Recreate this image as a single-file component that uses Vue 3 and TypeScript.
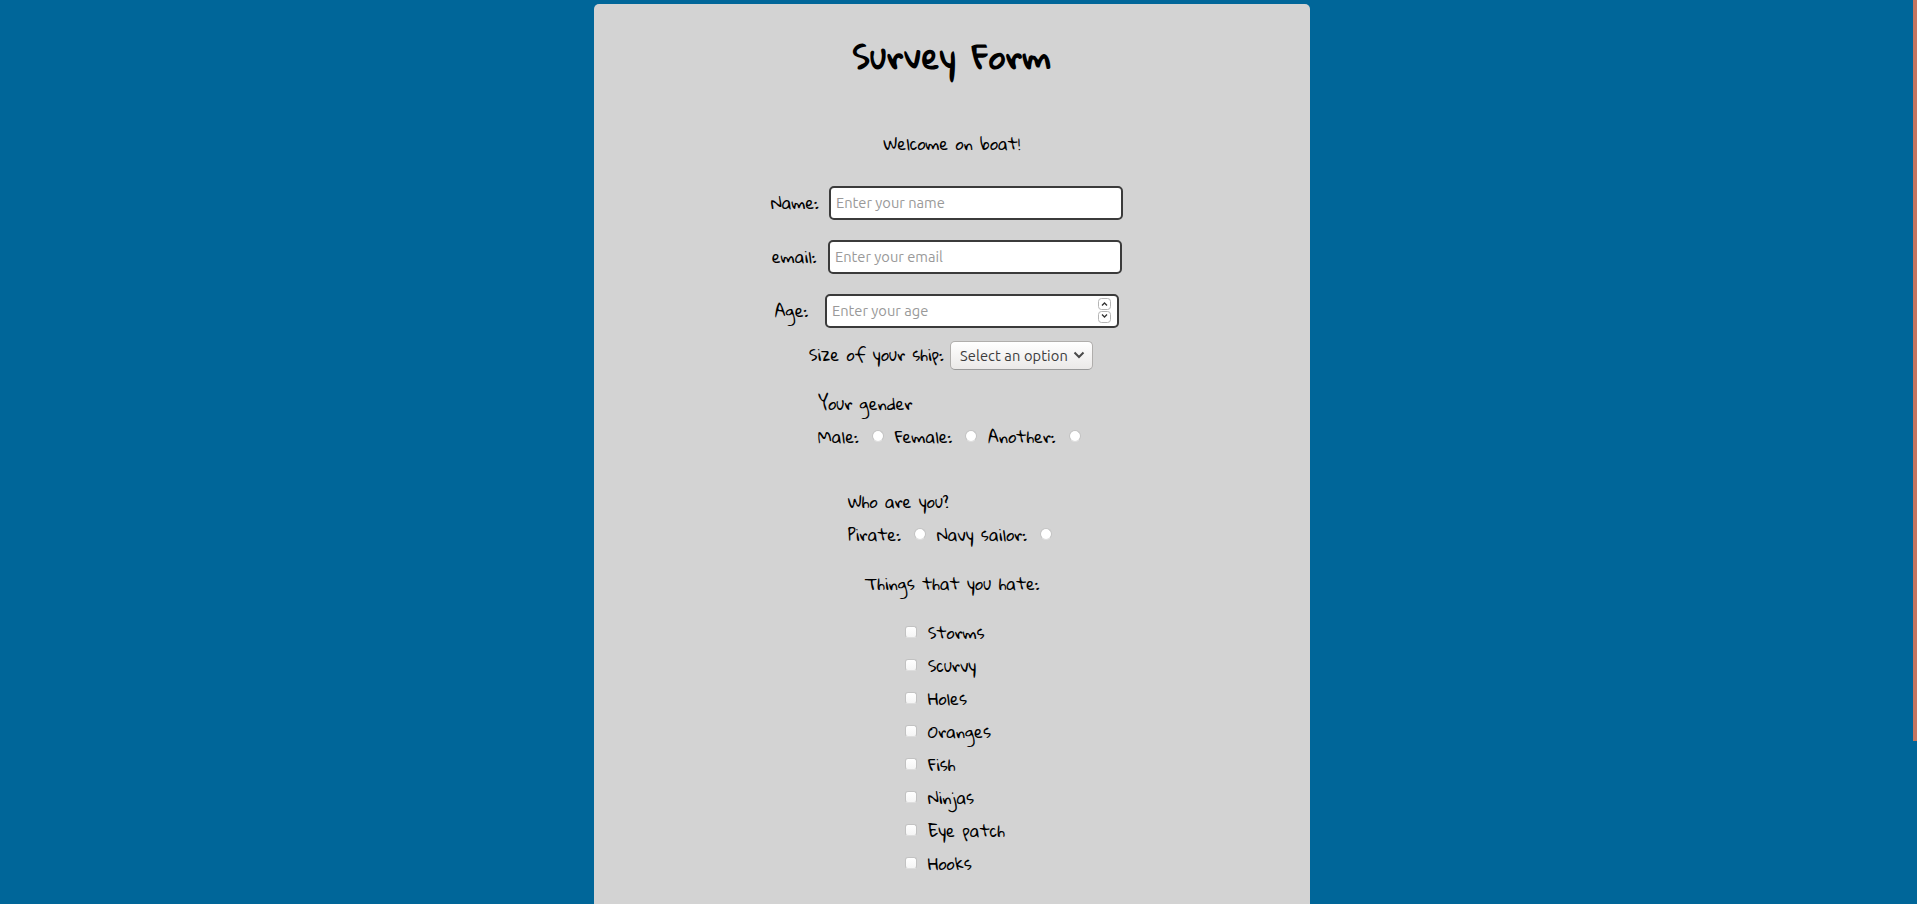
<script setup lang="ts">
interface TextField {
  id: string
  label: string
  placeholder: string
}

const fields: TextField[] = [
  { id: 'name', label: 'Name:', placeholder: 'Enter your name' },
  { id: 'email', label: 'email:', placeholder: 'Enter your email' },
  { id: 'age', label: 'Age:', placeholder: 'Enter your age' },
]
const genders: string[] = ['Male:', 'Female:', 'Another:']
const roles: string[] = ['Pirate:', 'Navy sailor:']
const hates: string[] = ['Storms', 'Scurvy', 'Holes', 'Oranges', 'Fish', 'Ninjas', 'Eye patch', 'Hooks']
</script>

<template>
  <main class="page">
    <form class="card" @submit.prevent>
      <h1 class="title">Survey Form</h1>
      <p class="welcome">Welcome on boat!</p>

      <div v-for="f in fields" :key="f.id" class="field" :class="f.id">
        <label :for="f.id">{{ f.label }}</label>
        <div class="box">
          <input :id="f.id" type="text" :placeholder="f.placeholder" />
          <div v-if="f.id === 'age'" class="spinner">
            <svg viewBox="0 0 13 12"><rect x=".5" y=".5" width="12" height="11" rx="3" /><path d="M4 7.5 6.5 5 9 7.5" /></svg>
            <svg viewBox="0 0 13 12"><rect x=".5" y=".5" width="12" height="11" rx="3" /><path d="M4 3.5 6.5 6 9 3.5" /></svg>
          </div>
        </div>
      </div>

      <div class="ship">
        <label>Size of your ship:</label>
        <button type="button" class="select">
          <span>Select an option</span>
          <svg viewBox="0 0 12 8"><path d="M1.5 1.5 6 6l4.500-4.500" /></svg>
        </button>
      </div>

      <section class="gender">
        <p>Your gender</p>
        <div class="radios">
          <label v-for="g in genders" :key="g">
            <span>{{ g }}</span>
            <input type="radio" name="gender" />
          </label>
        </div>
      </section>

      <section class="role">
        <p>Who are you?</p>
        <div class="radios">
          <label v-for="r in roles" :key="r">
            <span>{{ r }}</span>
            <input type="radio" name="role" />
          </label>
        </div>
      </section>

      <p class="hate-title">Things that you hate:</p>
      <div class="hates">
        <label v-for="h in hates" :key="h">
          <input type="checkbox" />
          <span>{{ h }}</span>
        </label>
      </div>
    </form>
    <div class="scrollbar"></div>
  </main>
</template>

<style>
body {
  margin: 0;
  overflow: hidden;
  background: #069;
}
</style>

<style scoped>
.page {
  box-sizing: border-box;
  height: 100vh;
  padding-top: 4px;
  overflow: hidden;
  background: #069;
  color: #000;
  font: 16px/24px "Gloria Hallelujah", Lato, sans-serif;
  letter-spacing: 0.1px;
}
.card {
  box-sizing: border-box;
  width: 716px;
  height: 1100px;
  margin-left: 594px;
  padding-top: 30px;
  border-radius: 5px;
  background: #d3d3d3;
}
.card label,
.card span {
  white-space: nowrap;
}
h1,
p {
  margin: 0;
}
.title {
  text-align: center;
  font-size: 32px;
  line-height: 44px;
  font-weight: 700;
  letter-spacing: 0.95px;
}
.welcome {
  margin: 54px 0 30px;
  text-align: center;
}
.field {
  display: flex;
  align-items: flex-start;
  height: 34px;
  margin-bottom: 20px;
}
.field label {
  box-sizing: border-box;
  padding-top: 5px;
}
.name label {
  width: 58px;
}
.email label {
  width: 56px;
}
.age label {
  width: 50px;
}
.name {
  margin-left: 177px;
}
.email {
  margin-left: 178px;
}
.age {
  margin-left: 181px;
  margin-bottom: 13px;
}
.box {
  box-sizing: border-box;
  display: flex;
  align-items: center;
  width: 294px;
  height: 34px;
  padding: 0 6px 0 5px;
  border: 2px solid #3b3b3b;
  border-radius: 5px;
  background: #fff;
}
.box input {
  flex: 1;
  min-width: 0;
  height: 28px;
  padding: 0 0 2px;
  border: 0;
  outline: 0;
  background: transparent;
  font: 14.67px Ubuntu, "Noto Sans", sans-serif;
  letter-spacing: 0;
}
.box input::placeholder {
  color: #999;
  opacity: 1;
}
.spinner {
  display: flex;
  flex-direction: column;
  gap: 1px;
  margin-top: -1px;
}
.spinner svg {
  display: block;
  width: 13px;
  height: 12px;
  fill: #fff;
  stroke: #b5b5b5;
}
.spinner path {
  fill: none;
  stroke: #333;
  stroke-width: 1.3;
}
.ship {
  display: flex;
  margin-left: 215px;
  height: 29px;
}
.ship label {
  width: 141px;
  padding-top: 2px;
}
.select {
  box-sizing: border-box;
  display: flex;
  align-items: center;
  justify-content: space-between;
  width: 143px;
  height: 29px;
  padding: 0 7px 1px 9px;
  border: 1px solid #b0aeac;
  border-bottom-color: #999;
  border-radius: 5px;
  background: linear-gradient(#fff, #ebe9e8);
  color: #3c3c3c;
  font: 14.67px Ubuntu, "Noto Sans", sans-serif;
  letter-spacing: 0.1px;
}
.select svg {
  flex: none;
  width: 12px;
  height: 8px;
  fill: none;
  stroke: #4a4a4a;
  stroke-width: 2;
}
.gender {
  margin: 22px 0 0 224px;
}
.role {
  margin: 41px 0 0 254px;
}
.radios {
  display: flex;
  gap: 11px;
  margin-top: 9px;
}
.radios label {
  display: flex;
  align-items: center;
  gap: 13px;
}
.radios input,
.hates input {
  appearance: none;
  box-sizing: border-box;
  flex: none;
  width: 12px;
  height: 12px;
  margin: 0 0 2px;
  border: 1px solid #c2c2c2;
  border-bottom-color: #dedede;
  background: #fff linear-gradient(#fff, #f5f5f5);
}
.radios input {
  border-radius: 50%;
  background: #fff;
}
.hates input {
  border-radius: 3px;
}
.hate-title {
  margin-top: 25px;
  text-align: center;
}
.hates {
  display: flex;
  flex-direction: column;
  gap: 9px;
  margin: 25px 0 0 311px;
}
.hates label {
  display: flex;
  align-items: center;
  gap: 11px;
}
.scrollbar {
  position: fixed;
  top: 0;
  right: 0;
  width: 4px;
  height: 741px;
  background: #c4755f;
}
</style>
